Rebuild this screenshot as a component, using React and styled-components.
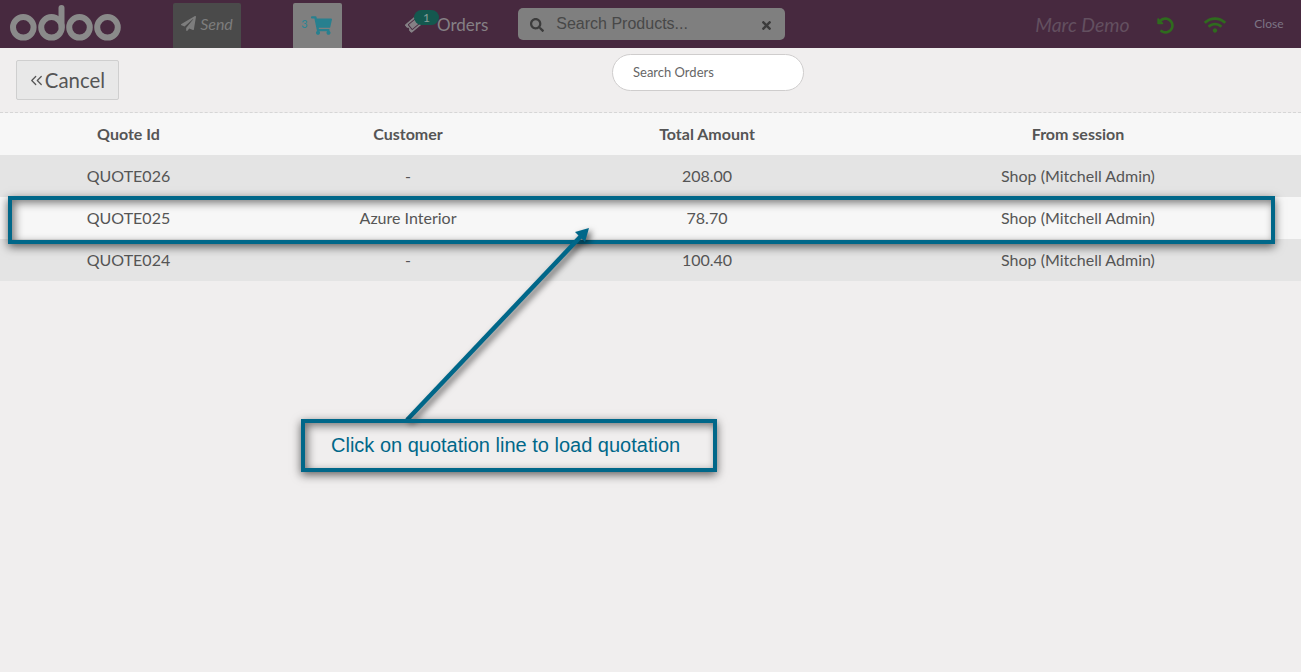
import React from "react";
import styled, { createGlobalStyle } from "styled-components";
import { FaPaperPlane, FaShoppingCart, FaSearch, FaTimes, FaWifi, FaTicketAlt, FaUndoAlt } from "react-icons/fa";
import { ChevronsLeft } from "lucide-react";

const GlobalStyle = createGlobalStyle`
  html, body {
    margin: 0;
    padding: 0;
    background: #f0eeee;
    font-family: "Lato", "Liberation Sans", sans-serif;
    color: #4c4c4c;
    overflow: hidden;
  }
`;

const Page = styled.div`
  position: relative;
  width: 1301px;
  height: 672px;
  overflow: hidden;
`;

const TopBar = styled.header`
  display: flex;
  align-items: flex-end;
  height: 48px;
  background: #47293f;
  padding-left: 10px;
  box-sizing: border-box;
`;

const LogoBox = styled.div`
  width: 112px;
  height: 48px;
  flex: none;
`;

const ActionTab = styled.div`
  display: flex;
  align-items: center;
  justify-content: center;
  flex: none;
  height: 45px;
  margin-left: ${(p) => p.$gap}px;
  width: ${(p) => p.$width}px;
  background: ${(p) => p.$bg};
  border-radius: 2px 2px 0 0;
`;

const SendLabel = styled.span`
  display: flex;
  align-items: center;
  gap: 4px;
  color: #7d7d7d;
  font-size: 16px;
  font-style: italic;
  padding-bottom: 4px;
`;

const CartCount = styled.span`
  font-size: 11px;
  color: #2a8595;
  margin: 0 3px 5px -2px;
`;

const OrdersLink = styled.div`
  position: relative;
  display: flex;
  align-items: center;
  gap: 15px;
  flex: none;
  height: 48px;
  margin-left: 64px;
  color: #858085;
  font-size: 17px;
`;

const OrdersBadge = styled.span`
  position: absolute;
  left: 8px;
  top: 10px;
  width: 25px;
  height: 15px;
  border-radius: 8px;
  background: #14584f;
  color: #8a9f9a;
  font-size: 12px;
  line-height: 15px;
  text-align: center;
`;

const ProductSearch = styled.div`
  display: flex;
  align-items: center;
  flex: none;
  width: 267px;
  height: 32px;
  margin: 0 0 8px 30px;
  padding: 2px 12px 0;
  box-sizing: border-box;
  background: #7f7f7f;
  border-radius: 5px;
  color: #3c3c3c;
`;

const ProductSearchText = styled.span`
  flex: 1;
  margin-left: 12px;
  padding-bottom: 2px;
  font-family: "Liberation Sans", Arial, sans-serif;
  font-size: 16px;
  color: #484848;
`;

const Cashier = styled.span`
  flex: none;
  align-self: center;
  margin-left: 250px;
  font-size: 19.4px;
  font-style: italic;
  color: #635060;
  width: 122px;
`;

const StatusIcon = styled.span`
  display: flex;
  flex: none;
  align-self: center;
  margin: 2px 0 0 ${(p) => p.$gap}px;
  color: #2f6b1e;
`;

const CloseText = styled.span`
  flex: none;
  align-self: center;
  margin: 0 0 1px 28px;
  font-size: 12px;
  color: #7d7585;
`;

const SubBar = styled.div`
  position: relative;
  display: flex;
  align-items: flex-start;
  height: 65px;
  padding: 12px 0 0 16px;
  box-sizing: border-box;
  border-bottom: 1px dashed #d6d6d6;
`;

const CancelButton = styled.button`
  display: flex;
  align-items: center;
  justify-content: center;
  width: 103px;
  height: 40px;
  padding: 0 3px 1px 0;
  background: #e8e8e8;
  border: 1px solid #cfcfcf;
  border-radius: 2px;
  font-family: inherit;
  font-size: 20.4px;
  color: #555;

  svg {
    margin: 2px -1px 0 0;
  }
`;

const OrderSearch = styled.input`
  width: 192px;
  height: 37px;
  margin: -6px 0 0 493px;
  padding: 0 20px 2px;
  box-sizing: border-box;
  background: #fff;
  border: 1px solid #cfcdcd;
  border-radius: 19px;
  font-family: inherit;
  font-size: 13px;
  outline: none;

  &::placeholder {
    color: #666;
    opacity: 1;
  }
`;

const Row = styled.div`
  display: grid;
  grid-template-columns: 257px 302px 296px 446px;
  height: 42px;
  padding-bottom: 2px;
  box-sizing: border-box;
  align-items: center;
  text-align: center;
  font-size: 16px;
  font-weight: ${(p) => (p.$head ? 700 : 400)};
  background: ${(p) => p.$bg};
  color: #555;
`;

const Annotation = styled.div`
  position: absolute;
  box-sizing: border-box;
  border: 4px solid #006789;
  box-shadow: 0 3px 9px rgba(0, 0, 0, 0.6), inset 3px 3px 9px rgba(0, 0, 0, 0.5);
`;

const RowHighlight = styled(Annotation)`
  left: 8px;
  top: 196px;
  width: 1267px;
  height: 48px;
`;

const Callout = styled(Annotation)`
  display: flex;
  align-items: center;
  left: 301px;
  top: 419px;
  width: 416px;
  height: 53px;
  padding: 0 0 1px 26px;
  font-family: "Liberation Sans", Arial, sans-serif;
  font-size: 20px;
  color: #006789;
`;

const ArrowLayer = styled.svg`
  position: absolute;
  left: 0;
  top: 0;
  pointer-events: none;
  filter: drop-shadow(3px 3px 3px rgba(0, 0, 0, 0.6));
`;

const quotes = [
  { id: "QUOTE026", customer: "-", total: "208.00", bg: "#e4e4e4" },
  { id: "QUOTE025", customer: "Azure Interior", total: "78.70", bg: "#f7f7f7" },
  { id: "QUOTE024", customer: "-", total: "100.40", bg: "#e4e4e4" },
];

const OdooLogo = () => (
  <svg width="112" height="48" viewBox="0 0 112 48" fill="none" stroke="#8a8a8a" strokeWidth="6">
    <circle cx="13.3" cy="27.3" r="10.3" />
    <circle cx="41.5" cy="27.3" r="10.3" />
    <path d="M51.5 27V8" strokeLinecap="round" />
    <circle cx="69.5" cy="27.3" r="10.3" />
    <circle cx="97.5" cy="27.3" r="10.3" />
  </svg>
);

const App = () => (
  <Page>
    <GlobalStyle />
    <TopBar>
      <LogoBox>
        <OdooLogo />
      </LogoBox>
      <ActionTab $gap={51} $width={68} $bg="#4a4a4a">
        <SendLabel>
          <FaPaperPlane size={15} />
          Send
        </SendLabel>
      </ActionTab>
      <ActionTab $gap={52} $width={49} $bg="#7f7f7f">
        <CartCount>3</CartCount>
        <FaShoppingCart size={21} color="#28808f" />
      </ActionTab>
      <OrdersLink>
        <FaTicketAlt size={16} color="#858085" transform="rotate(-40)" />
        <OrdersBadge>1</OrdersBadge>
        Orders
      </OrdersLink>
      <ProductSearch>
        <FaSearch size={14} />
        <ProductSearchText>Search Products...</ProductSearchText>
        <FaTimes size={13} />
      </ProductSearch>
      <Cashier>Marc Demo</Cashier>
      <StatusIcon $gap={0}>
        <FaUndoAlt size={17} />
      </StatusIcon>
      <StatusIcon $gap={30}>
        <FaWifi size={22} />
      </StatusIcon>
      <CloseText>Close</CloseText>
    </TopBar>
    <SubBar>
      <CancelButton>
        <ChevronsLeft size={19} strokeWidth={1.6} />
        Cancel
      </CancelButton>
      <OrderSearch placeholder="Search Orders" />
    </SubBar>
    <Row $head $bg="#f7f7f7">
      <span>Quote Id</span>
      <span>Customer</span>
      <span>Total Amount</span>
      <span>From session</span>
    </Row>
    {quotes.map((q) => (
      <Row key={q.id} $bg={q.bg}>
        <span>{q.id}</span>
        <span>{q.customer}</span>
        <span>{q.total}</span>
        <span>Shop (Mitchell Admin)</span>
      </Row>
    ))}
    <RowHighlight />
    <ArrowLayer width="1301" height="672">
      <line x1="407" y1="420" x2="582" y2="235" stroke="#006789" strokeWidth="4.5" />
      <polygon points="589,228 585,242 575,232" fill="#006789" />
    </ArrowLayer>
    <Callout>Click on quotation line to load quotation</Callout>
  </Page>
);

export default App;
